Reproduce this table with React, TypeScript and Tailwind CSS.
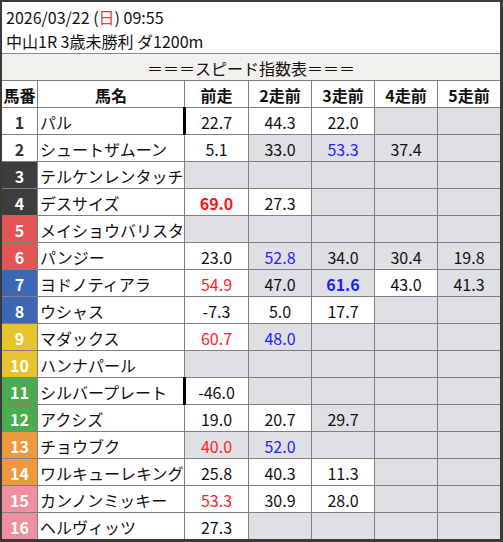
type Cell = { t: string; g?: boolean; c?: 'r' | 'R' | 'b' | 'B'; bar?: boolean };

interface Row {
  no: number;
  name: string;
  numBg: string;
  numFg: string;
  cells: Cell[];
}

const E: Cell = { t: '', g: true };

const rows: Row[] = [
  { no: 1, name: 'パル', numBg: 'bg-white', numFg: 'text-[#333]', cells: [{ t: '22.7', bar: true }, { t: '44.3' }, { t: '22.0' }, E, E] },
  { no: 2, name: 'シュートザムーン', numBg: 'bg-white', numFg: 'text-[#333]', cells: [{ t: '5.1' }, { t: '33.0', g: true }, { t: '53.3', g: true, c: 'b' }, { t: '37.4', g: true }, E] },
  { no: 3, name: 'テルケンレンタッチ', numBg: 'bg-[#3d3d3d]', numFg: 'text-white', cells: [E, E, E, E, E] },
  { no: 4, name: 'デスサイズ', numBg: 'bg-[#3d3d3d]', numFg: 'text-white', cells: [{ t: '69.0', c: 'R' }, { t: '27.3' }, E, E, E] },
  { no: 5, name: 'メイショウバリスタ', numBg: 'bg-[#e35454]', numFg: 'text-white', cells: [E, E, E, E, E] },
  { no: 6, name: 'パンジー', numBg: 'bg-[#e35454]', numFg: 'text-white', cells: [{ t: '23.0' }, { t: '52.8', g: true, c: 'b' }, { t: '34.0', g: true }, { t: '30.4', g: true }, { t: '19.8', g: true }] },
  { no: 7, name: 'ヨドノティアラ', numBg: 'bg-[#3d67b5]', numFg: 'text-white', cells: [{ t: '54.9', c: 'r' }, { t: '47.0', g: true }, { t: '61.6', g: true, c: 'B' }, { t: '43.0' }, { t: '41.3', g: true }] },
  { no: 8, name: 'ウシャス', numBg: 'bg-[#3d67b5]', numFg: 'text-white', cells: [{ t: '-7.3' }, { t: '5.0' }, { t: '17.7' }, E, E] },
  { no: 9, name: 'マダックス', numBg: 'bg-[#e7c32e]', numFg: 'text-white', cells: [{ t: '60.7', c: 'r' }, { t: '48.0', g: true, c: 'b' }, E, E, E] },
  { no: 10, name: 'ハンナパール', numBg: 'bg-[#e7c32e]', numFg: 'text-white', cells: [E, E, E, E, E] },
  { no: 11, name: 'シルバープレート', numBg: 'bg-[#49ad4d]', numFg: 'text-white', cells: [{ t: '-46.0', bar: true }, E, E, E, E] },
  { no: 12, name: 'アクシズ', numBg: 'bg-[#49ad4d]', numFg: 'text-white', cells: [{ t: '19.0' }, { t: '20.7' }, { t: '29.7', g: true }, E, E] },
  { no: 13, name: 'チョウブク', numBg: 'bg-[#ef983e]', numFg: 'text-white', cells: [{ t: '40.0', g: true, c: 'r' }, { t: '52.0', g: true, c: 'b' }, E, E, E] },
  { no: 14, name: 'ワルキューレキング', numBg: 'bg-[#ef983e]', numFg: 'text-white', cells: [{ t: '25.8' }, { t: '40.3' }, { t: '11.3' }, E, E] },
  { no: 15, name: 'カンノンミッキー', numBg: 'bg-[#ef8fa0]', numFg: 'text-white', cells: [{ t: '53.3', c: 'r' }, { t: '30.9' }, { t: '28.0' }, E, E] },
  { no: 16, name: 'ヘルヴィッツ', numBg: 'bg-[#ef8fa0]', numFg: 'text-white', cells: [{ t: '27.3' }, E, E, E, E] },
];

const heads = ['馬番', '馬名', '前走', '2走前', '3走前', '4走前', '5走前'];

const colorOf = (c?: Cell['c']) => {
  if (c === 'r') return 'text-[#ff2222]';
  if (c === 'R') return 'text-[#ff1111] font-bold';
  if (c === 'b') return 'text-[#2222ff]';
  if (c === 'B') return 'text-[#1f1fff] font-bold';
  return 'text-[#111]';
};

const grid = 'grid grid-cols-[36px_147px_64px_63px_63px_63px_62px]';

export default function App() {
  return (
    <div
      className="w-[503px] h-[542px] bg-white border-l-2 border-t-2 border-r-[3px] border-b-[3px] border-[#3a3a3a] text-[16px] text-[#111] overflow-hidden"
      style={{ fontFamily: '"Noto Sans CJK JP", "Noto Sans", sans-serif' }}
    >
      <div className="h-[52px] border-b border-[#8a8a8a] pl-[4px] pt-[3px] leading-[24px]">
        <div>
          2026/03/22 (<span className="text-[#e84040]">日</span>) 09:55
        </div>
        <div>中山1R 3歳未勝利 ダ1200m</div>
      </div>

      <div className="h-[27px] border-b border-[#808080] bg-[#f2f1ed] flex items-center justify-center leading-none pt-[1px]">
        ＝＝＝スピード指数表＝＝＝
      </div>

      <div className={`${grid} h-[27px] border-b border-[#808080]`}>
        {heads.map((h, i) => (
          <div
            key={h}
            className={`flex items-center justify-center font-bold leading-none pt-[1px] ${i < 6 ? 'border-r border-[#808080]' : ''}`}
          >
            {h}
          </div>
        ))}
      </div>

      {rows.map((r, ri) => (
        <div
          key={r.no}
          className={`${grid} ${ri < rows.length - 1 ? 'h-[27px] border-b' : 'h-[26px]'} border-[#808080]`}
        >
          <div className={`${r.numBg} ${r.numFg} border-r border-[#808080] flex items-center justify-center font-bold leading-none pt-[1px]`}>
            {r.no}
          </div>
          <div className="border-r border-[#808080] flex items-center pl-[2px] leading-none pt-[1px] whitespace-nowrap overflow-hidden">
            {r.name}
          </div>
          {r.cells.map((c, ci) => (
            <div
              key={ci}
              className={`relative flex items-center justify-center leading-none pt-[1px] ${c.g ? 'bg-[#dfe0e4]' : 'bg-white'} ${ci < 4 ? 'border-r border-[#808080]' : ''} ${colorOf(c.c)}`}
            >
              {c.bar && <span className="absolute left-[-2px] top-[-1px] bottom-[-1px] w-[3px] bg-black" />}
              {c.t}
            </div>
          ))}
        </div>
      ))}
    </div>
  );
}
